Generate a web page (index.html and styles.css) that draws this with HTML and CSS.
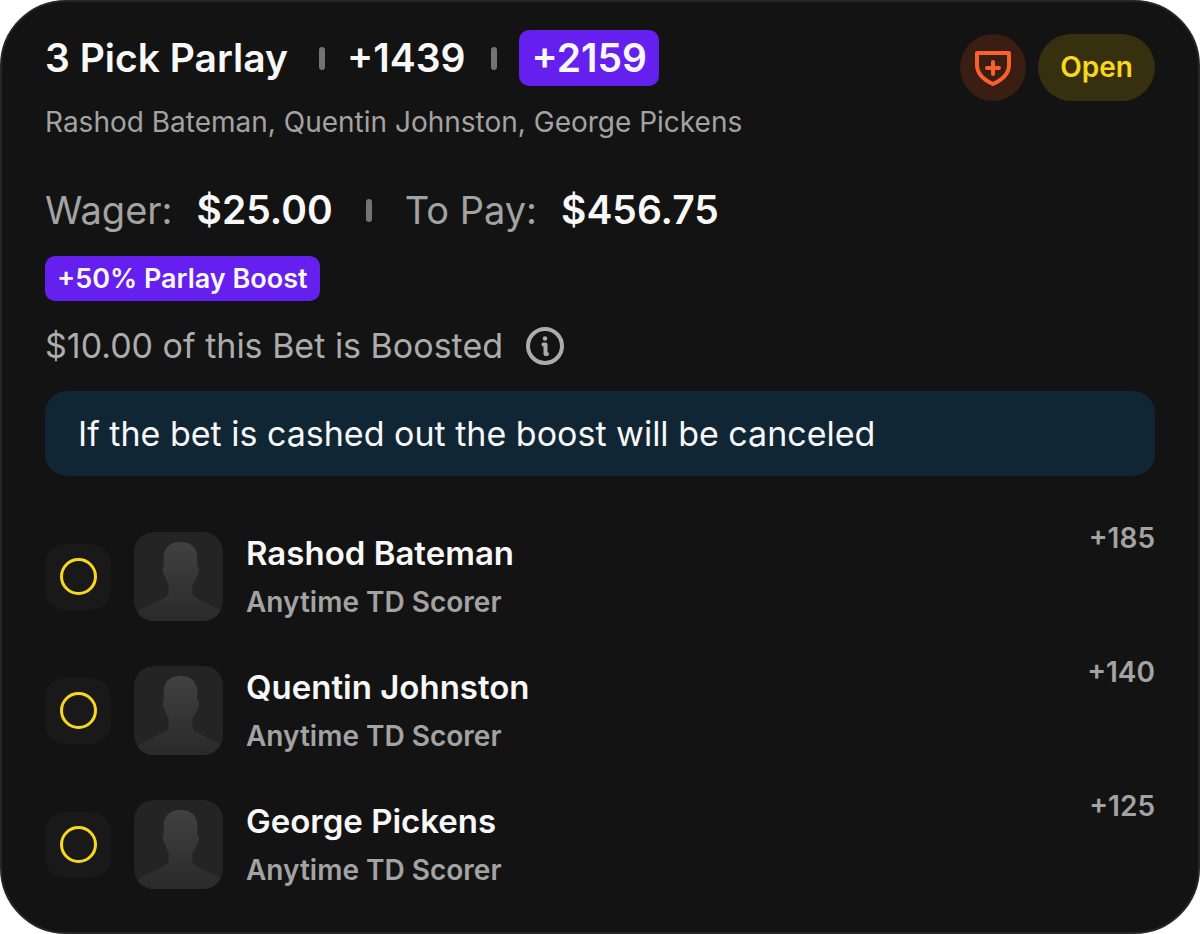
FILE: index.html
```html
<!DOCTYPE html>
<html lang="en">
<head>
  <meta charset="UTF-8">
  <meta name="viewport" content="width=device-width, initial-scale=1">
  <title>3 Pick Parlay</title>
  <link rel="stylesheet" href="styles.css">
</head>
<body>

<!-- Shared player silhouette -->
<svg class="defs" width="0" height="0" aria-hidden="true">
  <defs>
    <linearGradient id="shade" x1="0" y1="0" x2="0" y2="1">
      <stop offset="0" stop-color="#414141"/>
      <stop offset="1" stop-color="#2a2a2a"/>
    </linearGradient>
    <symbol id="player" viewBox="0 0 90 90">
      <path fill="url(#shade)" d="M47 10c-11 0-17 6-17 16v9c-2 1-1 8 2 11 1 4 2 5 3 7v10c-2 3-11 7-17 10-7 3-11 5-14 8v9h86V81c-3-3-8-5-15-8-6-3-14-7-16-10V53c2-2 3-3 4-7 3-3 4-10 1-11v-9c0-10-6-16-17-16z"/>
    </symbol>
  </defs>
</svg>

<main class="bet-card">
  <header class="bet-header">
    <div class="bet-heading">
      <div class="bet-title">
        <h1>3 Pick Parlay</h1>
        <span class="divider"></span>
        <span class="odds">+1439</span>
        <span class="divider"></span>
        <span class="odds boosted-odds">+2159</span>
      </div>
      <p class="players">Rashod Bateman, Quentin Johnston, George Pickens</p>
    </div>
    <div class="bet-status">
      <span class="protected">
        <svg width="36" height="36" viewBox="0 0 36 36" fill="none" stroke="#f9602c" stroke-width="4" stroke-linecap="round" stroke-linejoin="round" role="img" aria-label="Protected">
          <path d="M2 3h32v12c0 8-5 14-16 19C7 29 2 23 2 15z"/>
          <path d="M18 12v12M12 18h12"/>
        </svg>
      </span>
      <span class="status">Open</span>
    </div>
  </header>

  <div class="amounts">
    <span class="label">Wager:</span>
    <span class="amount">$25.00</span>
    <span class="divider"></span>
    <span class="label">To Pay:</span>
    <span class="amount">$456.75</span>
  </div>

  <span class="boost-badge">+50% Parlay Boost</span>

  <div class="boost-info">
    <span>$10.00 of this Bet is Boosted</span>
    <button type="button" class="info-btn" aria-label="Boost details">
      <svg width="38" height="38" viewBox="0 0 38 38" fill="none" stroke="#acacac">
        <circle cx="19" cy="19" r="17" stroke-width="4"/>
        <circle cx="19" cy="11.500" r="2.300" fill="#acacac" stroke="none"/>
        <path d="M17.500 17.500h2v9.500h1.500" stroke-width="4" stroke-linecap="round" stroke-linejoin="round"/>
      </svg>
    </button>
  </div>

  <p class="notice">If the bet is cashed out the boost will be canceled</p>

  <ul class="legs">
    <li class="leg">
      <span class="leg-state"></span>
      <svg class="avatar" aria-hidden="true"><use href="#player"/></svg>
      <div class="leg-text">
        <h2>Rashod Bateman</h2>
        <p>Anytime TD Scorer</p>
      </div>
      <span class="leg-odds">+185</span>
    </li>
    <li class="leg">
      <span class="leg-state"></span>
      <svg class="avatar" aria-hidden="true"><use href="#player"/></svg>
      <div class="leg-text">
        <h2>Quentin Johnston</h2>
        <p>Anytime TD Scorer</p>
      </div>
      <span class="leg-odds">+140</span>
    </li>
    <li class="leg">
      <span class="leg-state"></span>
      <svg class="avatar" aria-hidden="true"><use href="#player"/></svg>
      <div class="leg-text">
        <h2>George Pickens</h2>
        <p>Anytime TD Scorer</p>
      </div>
      <span class="leg-odds">+125</span>
    </li>
  </ul>
</main>

</body>
</html>
```

FILE: styles.css
```css
*, *::before {
  box-sizing: border-box;
}
body {
  margin: 0;
  background: #fff;
  color: #f8f8f8;
  font-family: Inter, sans-serif;
}
h1, h2, p, ul {
  margin: 0;
  padding: 0;
}
.defs {
  display: block;
}
.bet-card {
  padding: 28px 43px 43px;
  background: #131313;
  border: 2px solid #262626;
  border-radius: 66px;
}

/* Header */
.bet-header {
  display: flex;
  justify-content: space-between;
  align-items: flex-start;
}
.bet-title {
  display: flex;
  align-items: center;
}
h1, .odds {
  font-size: 39px;
  line-height: 56px;
  font-weight: 600;
}
.divider {
  width: 6px;
  height: 23px;
  background: #737373;
  border-radius: 3px;
}
.bet-title .divider {
  margin: 0 22px 0 31px;
}
.bet-title .odds + .divider {
  margin: 0 22px 0 26px;
}
.boosted-odds {
  padding: 0 12px;
  background: #651fee;
  border-radius: 10px;
}
.bet-status {
  display: flex;
  gap: 12px;
  padding-top: 4px;
}
.protected {
  display: flex;
  align-items: center;
  justify-content: center;
  width: 66px;
  height: 67px;
  background: #3a1d13;
  border-radius: 50%;
}
.status {
  padding: 0 22px;
  background: #37300f;
  border-radius: 34px;
  color: #f8d71c;
  font-size: 28px;
  line-height: 67px;
  font-weight: 600;
}
.players {
  margin-top: 18px;
  color: #a3a3a3;
  font-size: 28px;
  line-height: 36px;
}

/* Wager and payout */
.amounts {
  display: flex;
  align-items: center;
  margin-top: 46px;
  font-size: 39px;
  line-height: 48px;
}
.label {
  margin-right: 24px;
  color: #a3a3a3;
  font-size: 38px;
}
.amount {
  font-weight: 600;
}
.amounts .divider {
  margin: 0 33px;
}

/* Boost */
.boost-badge {
  display: block;
  width: fit-content;
  margin-top: 22px;
  padding: 0 12px;
  background: #651fee;
  border-radius: 10px;
  font-size: 27px;
  line-height: 45px;
  font-weight: 600;
}
.boost-info {
  display: flex;
  align-items: center;
  gap: 23px;
  margin-top: 25px;
  color: #acacac;
  font-size: 34px;
  line-height: 40px;
}
.info-btn {
  display: flex;
  padding: 0;
  background: none;
  border: none;
  cursor: pointer;
}
.notice {
  margin-top: 25px;
  padding: 0 33px;
  background: #102635;
  border-radius: 22px;
  font-size: 34px;
  line-height: 85px;
}

/* Legs */
.legs {
  display: grid;
  gap: 45px;
  margin-top: 56px;
  list-style: none;
}
.leg {
  display: flex;
  align-items: center;
}
.leg-state {
  display: flex;
  align-items: center;
  justify-content: center;
  width: 66px;
  height: 66px;
  background: #191919;
  border-radius: 20px;
}
.leg-state::before {
  content: "";
  width: 37px;
  height: 37px;
  border: 3px solid #f8d71c;
  border-radius: 50%;
}
.avatar {
  width: 89px;
  height: 89px;
  margin: 0 23px;
  background: #242424;
  border-radius: 20px;
}
.leg-text {
  flex: 1;
}
h2 {
  font-size: 33px;
  line-height: 38px;
  font-weight: 600;
}
.leg-text p {
  margin-top: 12px;
  color: #a3a3a3;
  font-size: 28px;
  line-height: 36px;
  font-weight: 600;
}
.leg-odds {
  align-self: flex-start;
  color: #a3a3a3;
  font-size: 28px;
  line-height: 12px;
  font-weight: 600;
}
```
